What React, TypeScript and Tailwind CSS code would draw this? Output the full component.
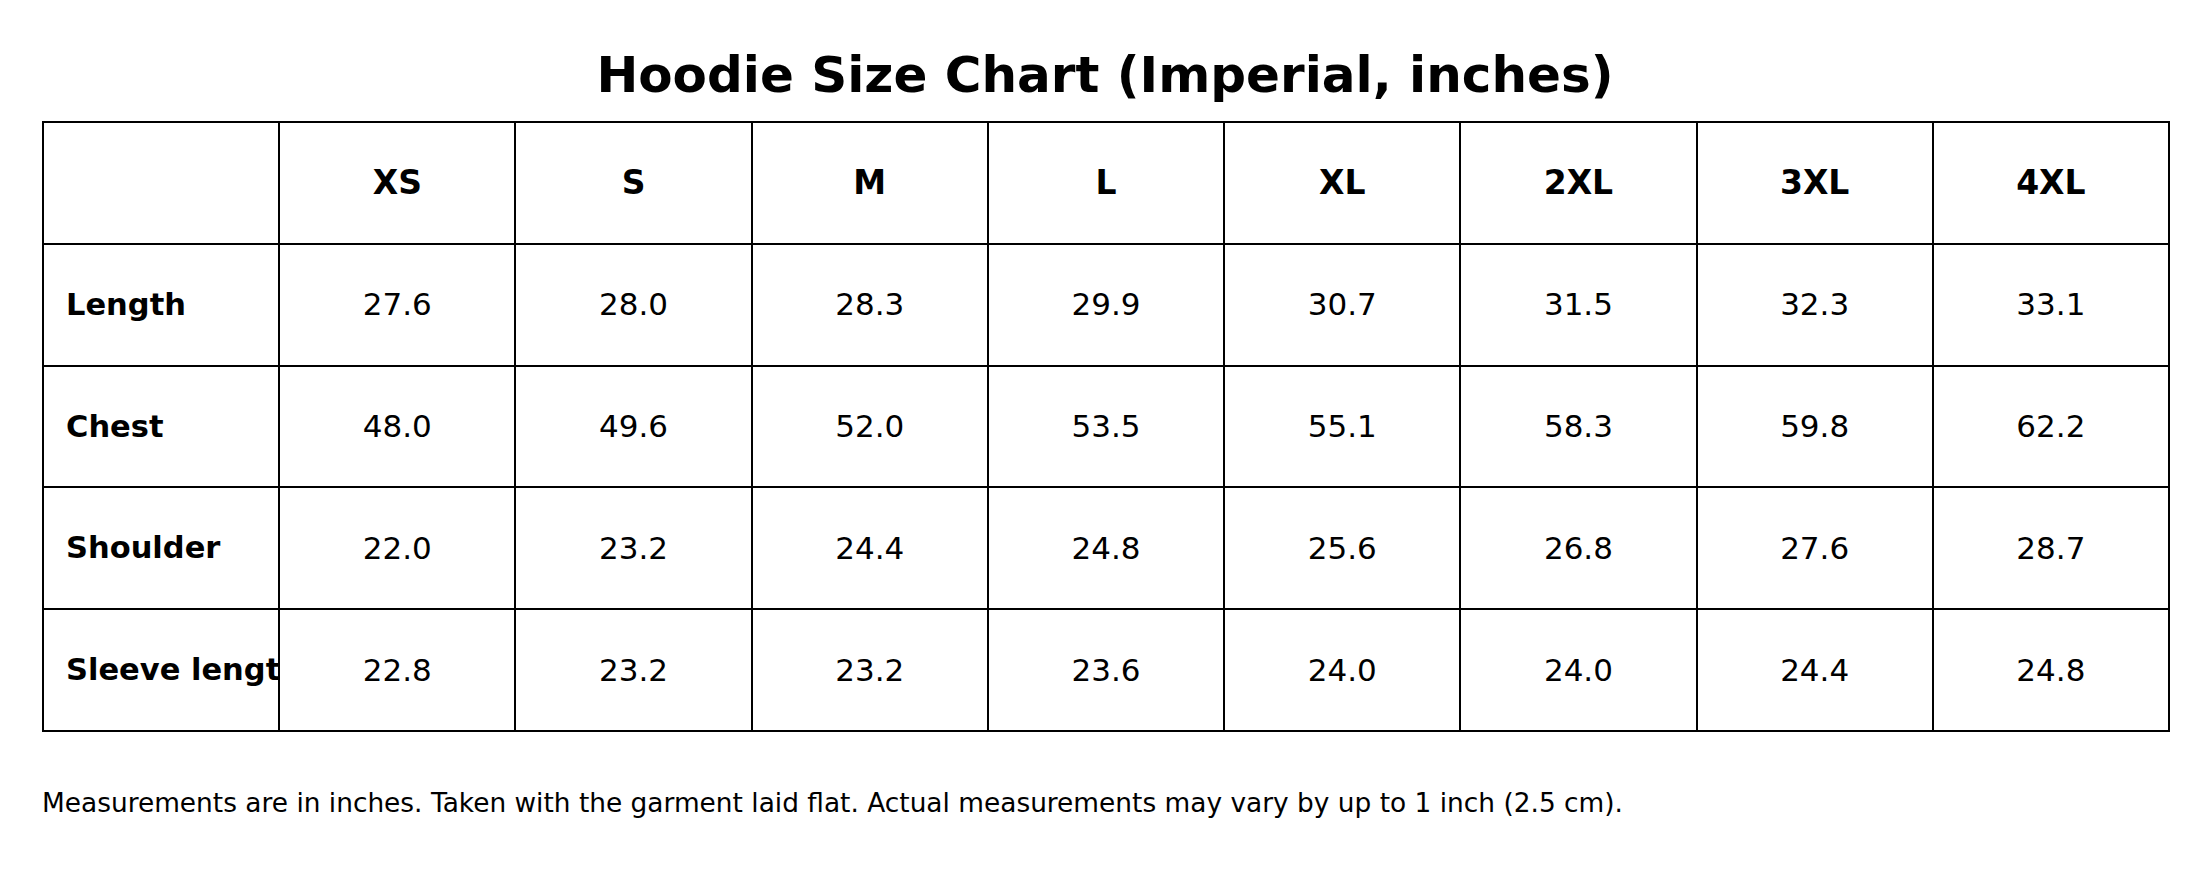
import React from "react";

const sizes = ["XS", "S", "M", "L", "XL", "2XL", "3XL", "4XL"];
const rows: { label: string; values: string[] }[] = [
  { label: "Length", values: ["27.6", "28.0", "28.3", "29.9", "30.7", "31.5", "32.3", "33.1"] },
  { label: "Chest", values: ["48.0", "49.6", "52.0", "53.5", "55.1", "58.3", "59.8", "62.2"] },
  { label: "Shoulder", values: ["22.0", "23.2", "24.4", "24.8", "25.6", "26.8", "27.6", "28.7"] },
  { label: "Sleeve length", values: ["22.8", "23.2", "23.2", "23.6", "24.0", "24.0", "24.4", "24.8"] },
];

const font = { fontFamily: '"DejaVu Sans", "Liberation Sans", sans-serif' };

export default function App() {
  return (
    <div
      className="w-[2210px] h-[886px] bg-white text-black flex flex-col overflow-hidden"
      style={font}
    >
      <h1 className="mt-[45px] h-[60px] leading-[60px] text-[50px] font-bold text-center">
        Hoodie Size Chart (Imperial, inches)
      </h1>
      <div className="mt-[16px] ml-[42px] w-[2128px] h-[611px] grid grid-cols-9 grid-rows-5 border-l-2 border-t-2 border-black">
        <div className="border-r-2 border-b-2 border-black" />
        {sizes.map((s) => (
          <div
            key={s}
            className="border-r-2 border-b-2 border-black flex items-center justify-center text-[33px] font-bold"
          >
            {s}
          </div>
        ))}
        {rows.map((r) => (
          <React.Fragment key={r.label}>
            <div className="border-r-2 border-b-2 border-black flex items-center pl-[22px] text-[30.5px] font-bold whitespace-nowrap overflow-hidden">
              {r.label}
            </div>
            {r.values.map((v, i) => (
              <div
                key={i}
                className="border-r-2 border-b-2 border-black flex items-center justify-center text-[31px]"
              >
                {v}
              </div>
            ))}
          </React.Fragment>
        ))}
      </div>
      <p className="mt-[53px] ml-[42px] h-[36px] leading-[36px] text-[26.4px] whitespace-nowrap">
        Measurements are in inches. Taken with the garment laid flat. Actual measurements may vary by up to 1 inch (2.5 cm).
      </p>
    </div>
  );
}
